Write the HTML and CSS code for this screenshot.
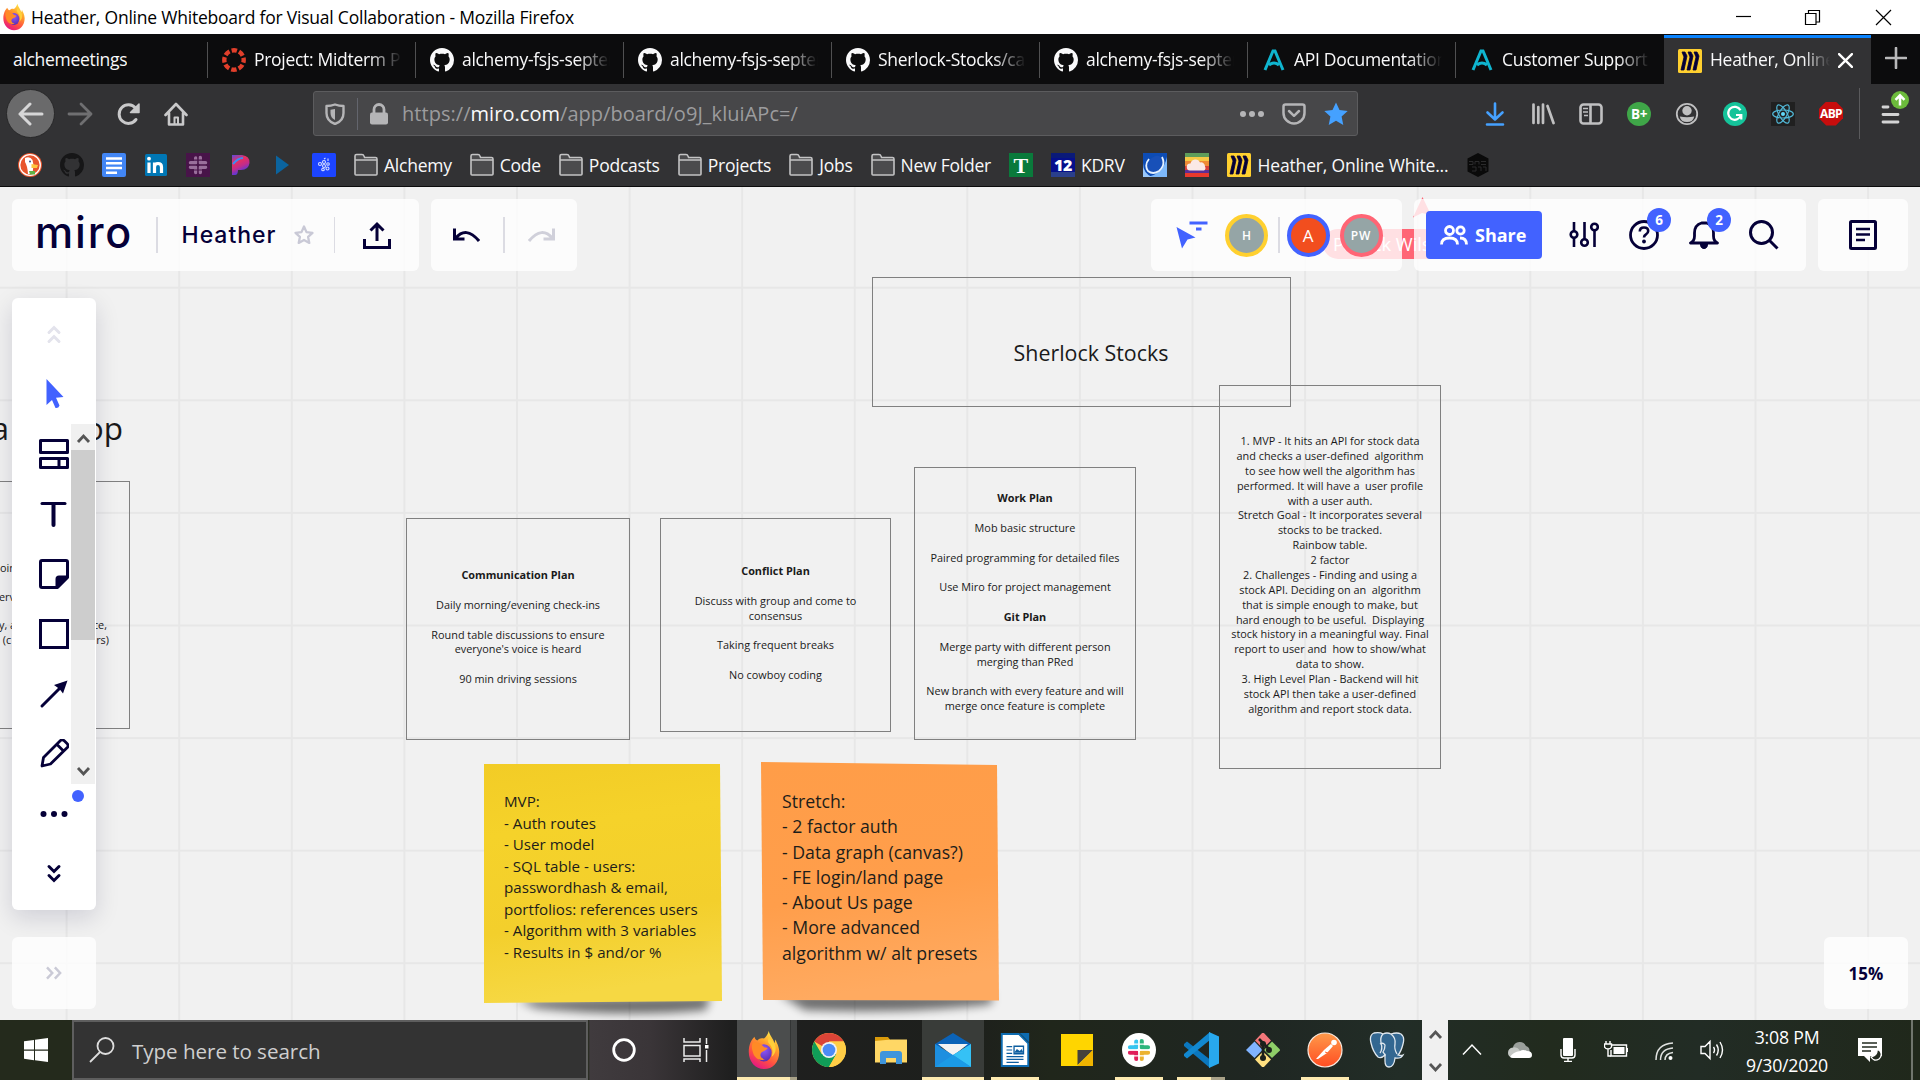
FILE: index.html
```html
<!DOCTYPE html>
<html lang="en">
<head>
<meta charset="utf-8">
<title>Heather, Online Whiteboard for Visual Collaboration</title>
<link rel="stylesheet" href="styles.css">
</head>
<body>
<svg class="defs" aria-hidden="true">
  <defs>
    <linearGradient id="ffFlame" x1=".8" y1="0" x2=".3" y2="1"><stop offset="0" stop-color="#fff44f"/><stop offset=".35" stop-color="#ffa02a"/><stop offset=".7" stop-color="#ff4f42"/><stop offset="1" stop-color="#e31587"/></linearGradient>
    <radialGradient id="ffGlobe" cx=".5" cy=".3" r=".7"><stop offset="0" stop-color="#9059ff"/><stop offset="1" stop-color="#5b2fae"/></radialGradient>
    <linearGradient id="pandora" x1="0" y1="0" x2=".4" y2="1"><stop offset="0" stop-color="#5a4be0"/><stop offset=".35" stop-color="#e8305f"/><stop offset=".65" stop-color="#c22c8a"/><stop offset="1" stop-color="#3a3cf0"/></linearGradient>
    <linearGradient id="postman" x1="0" y1="0" x2="0" y2="1"><stop offset="0" stop-color="#ff9a4a"/><stop offset="1" stop-color="#ff4d22"/></linearGradient>
    <linearGradient id="yellowPaper" x1="0" y1="0" x2=".15" y2="1"><stop offset="0" stop-color="#f2cc26"/><stop offset=".3" stop-color="#f5d22a"/><stop offset=".7" stop-color="#f3cf2c"/><stop offset="1" stop-color="#f6d843"/></linearGradient>
    <linearGradient id="orangePaper" x1="0" y1="0" x2=".15" y2="1"><stop offset="0" stop-color="#ff9d48"/><stop offset=".6" stop-color="#ff9e4b"/><stop offset="1" stop-color="#ffaa60"/></linearGradient>
    <filter id="soft" x="-20%" y="-100%" width="140%" height="300%"><feGaussianBlur stdDeviation="5"/></filter>
    <symbol id="firefox" viewBox="0 0 34 42">
      <path d="M22 1c-1 4-3 6-5 8-3-1-5 0-7 2-2-1-3-3-3-4C4 10 1 15 1 23c0 10 7 18 16 18s16-7 16-18c0-6-3-10-4-13l-1 4C27 9 23 6 22 1z" fill="url(#ffFlame)"/>
      <ellipse cx="17" cy="24" rx="8" ry="9" fill="url(#ffGlobe)"/>
      <path d="M5 13c5-1 9 1 12 5l4 1c-2 3-5 3-7 5-2 3 0 6 4 7-7 2-12-3-13-9-1-3-1-6 0-9z" fill="#ff8a26"/>
      <path d="M22 14c4 4 5 9 3 14 3-2 5-6 4-11-1-5-5-7-7-9-1 3-1 5 0 6z" fill="#ffcf3a"/>
    </symbol>
    <symbol id="github" viewBox="0 0 16 16"><path fill="currentColor" fill-rule="evenodd" d="M8 0C3.58 0 0 3.58 0 8c0 3.54 2.29 6.53 5.47 7.59.4.07.55-.17.55-.38 0-.19-.01-.82-.01-1.49-2.01.37-2.53-.49-2.69-.94-.09-.23-.48-.94-.82-1.13-.28-.15-.68-.52-.01-.53.63-.01 1.08.58 1.23.82.72 1.21 1.87.87 2.33.66.07-.52.28-.87.51-1.07-1.78-.2-3.64-.89-3.64-3.95 0-.87.31-1.59.82-2.15-.08-.2-.36-1.02.08-2.12 0 0 .67-.21 2.2.82.64-.18 1.32-.27 2-.27s1.36.09 2 .27c1.53-1.04 2.2-.82 2.2-.82.44 1.1.16 1.92.08 2.12.51.56.82 1.27.82 2.15 0 3.07-1.87 3.75-3.65 3.95.29.25.54.73.54 1.48 0 1.07-.01 1.93-.01 2.2 0 .21.15.46.55.38A8.01 8.01 0 0016 8c0-4.42-3.58-8-8-8z"/></symbol>
    <symbol id="canvas" viewBox="0 0 24 24"><circle cx="12" cy="12" r="9.700" fill="none" stroke="#e13f2b" stroke-width="4.400" stroke-dasharray="5.400 2.220" stroke-dashoffset="2.700"/></symbol>
    <symbol id="alpha" viewBox="0 0 24 24"><path d="M3 22 11 3h2l8 19M7 17q5-4 10 0" fill="none" stroke="#0fb5cf" stroke-width="3"/></symbol>
    <symbol id="mirofav" viewBox="0 0 24 24"><rect width="24" height="24" rx="1.500" fill="#ffd02f"/><path d="M4 3h3l2 4-3 14H3l3-13zM10 3h3l2 4-3 14H9l3-13zM16 3h3l2 4-3 14h-3l3-13z" fill="#050038" stroke="#050038" stroke-width=".8"/></symbol>
    <symbol id="folder" viewBox="0 0 24 24"><path d="M1 21V3q0-1.500 1.500-1.500H8q1.500 0 2 1.500l.6 1.500H21.500Q23 4.500 23 6v15q0 1-1 1H2q-1 0-1-1z" fill="#4b4b4d" stroke="#c3c3c4" stroke-width="1.600"/><path d="M1 7h22" stroke="#c3c3c4" stroke-width="1.500"/></symbol>
    <symbol id="slack" viewBox="0 0 24 24"><g fill="none" stroke-width="4.200" stroke-linecap="round"><path d="M9.300 3.500v5.800M3 9.300h6.300" stroke="var(--s1)"/><path d="M14.700 3v6.300M14.700 9.300H21" stroke="var(--s2)"/><path d="M14.700 14.700v6.300M14.700 14.700H21" stroke="var(--s3)"/><path d="M9.300 14.700v6.300M3 14.700h6.300" stroke="var(--s4)"/></g><path d="M11.900 0v24M0 12h24M5 6.100h14M5 17.900h14" stroke="var(--sb)" stroke-width="1.300"/></symbol>
  </defs>
</svg>

<header class="titlebar">
  <svg class="title-icon"><use href="#firefox"/></svg>
  <span class="title-text">Heather, Online Whiteboard for Visual Collaboration - Mozilla Firefox</span>
  <svg class="win-controls" viewBox="0 0 160 18" fill="none" stroke="#000" stroke-width="1.200"><path d="M1 8.500h15"/><path d="M70.500 5.500h10.500v11h-10.500zM73.500 5.500v-3h11v11.500h-3"/><path d="M141 2l15 15M156 2l-15 15"/></svg>
</header>

<nav class="tabs">
  <div class="tab first"><span class="tab-label">alchemeetings</span></div>
  <div class="tab"><svg class="fav"><use href="#canvas"/></svg><span class="tab-label fade">Project: Midterm Project</span></div>
  <div class="tab"><svg class="fav"><use href="#github"/></svg><span class="tab-label fade">alchemy-fsjs-september</span></div>
  <div class="tab"><svg class="fav"><use href="#github"/></svg><span class="tab-label fade">alchemy-fsjs-september</span></div>
  <div class="tab"><svg class="fav"><use href="#github"/></svg><span class="tab-label fade">Sherlock-Stocks/capstone</span></div>
  <div class="tab"><svg class="fav"><use href="#github"/></svg><span class="tab-label fade">alchemy-fsjs-september</span></div>
  <div class="tab"><svg class="fav"><use href="#alpha"/></svg><span class="tab-label fade">API Documentation</span></div>
  <div class="tab last"><svg class="fav"><use href="#alpha"/></svg><span class="tab-label fade">Customer Support</span></div>
  <div class="tab active"><svg class="fav"><use href="#mirofav"/></svg><span class="tab-label fade">Heather, Online Wh</span><svg class="tab-close" viewBox="0 0 14 14"><path d="M1 1l12 12M13 1L1 13" stroke="#fff" stroke-width="2.200" stroke-linecap="round"/></svg></div>
  <svg class="new-tab" viewBox="0 0 22 22"><path d="M11 1v20M1 11h20" stroke="#b9b9ba" stroke-width="2.600" stroke-linecap="round"/></svg>
</nav>

<div class="navbar">
  <span class="back"><svg viewBox="0 0 26 24" class="i26" fill="none" stroke="#d6d6d7" stroke-width="3" stroke-linecap="round" stroke-linejoin="round"><path d="M24 12H2M12 2L2 12l10 10"/></svg></span>
  <svg viewBox="0 0 26 24" class="i26 fwd" fill="none" stroke="#6f6f71" stroke-width="2.800" stroke-linecap="round" stroke-linejoin="round"><path d="M2 12h22M14 2l10 10-10 10"/></svg>
  <svg viewBox="0 0 24 24" class="i24 reload" fill="none" stroke="#c9c9ca" stroke-width="3" stroke-linecap="round"><path d="M19 17.500A9.300 9.300 0 1 1 18.500 6"/><path d="M22 2v8.500h-8.500z" fill="#c9c9ca" stroke-width="1.500" stroke-linejoin="round"/></svg>
  <svg viewBox="0 0 24 24" class="i24 home" fill="none" stroke="#c9c9ca" stroke-width="2.600" stroke-linecap="round" stroke-linejoin="round"><path d="M1.500 13L12 2l10.500 11M5 11v11.500h14V11"/><path d="M10.500 22v-6.500h3.500V22" stroke-width="2"/></svg>
  <div class="urlbar">
    <svg viewBox="0 0 20 22" class="shield"><path d="M10 1.500Q14 3 18.500 3v7q0 8-8.500 11Q1.500 18 1.500 10V3Q6 3 10 1.500z" fill="none" stroke="#b5b5b7" stroke-width="2.400" stroke-linejoin="round"/><path d="M10 6v11q-4.500-2-4.500-7V6.700z" fill="#b5b5b7"/></svg>
    <i class="url-sep"></i>
    <svg viewBox="0 0 20 22" class="lock"><path d="M5 10V6.500a5 5 0 0 1 10 0V10" fill="none" stroke="#b5b5b7" stroke-width="2.800"/><rect x="1" y="9.500" width="18" height="12" rx="2" fill="#b5b5b7"/></svg>
    <span class="url">https://<b>miro.com</b>/app/board/o9J_kluiAPc=/</span>
    <svg viewBox="0 0 26 8" class="url-dots" fill="#b5b5b7"><circle cx="4" cy="4" r="3"/><circle cx="13" cy="4" r="3"/><circle cx="22" cy="4" r="3"/></svg>
    <svg viewBox="0 0 24 22" class="pocket" fill="none" stroke="#b5b5b7" stroke-width="2.500" stroke-linecap="round" stroke-linejoin="round"><path d="M3.500 1.500h17q2 0 2 2V10a10.500 10.500 0 0 1-21 0V3.500q0-2 2-2z"/><path d="M7 8l5 4.800L17 8"/></svg>
    <svg viewBox="0 0 24 24" class="i24"><path d="M12 .5l3.500 7.600 8.200.9-6.100 5.600 1.700 8.400L12 18.800 4.700 23l1.700-8.400L.3 9l8.200-.9z" fill="#45a1ff"/></svg>
  </div>
  <div class="extensions">
    <svg viewBox="0 0 24 24" class="i24" fill="none" stroke="#45a1ff" stroke-width="2.600" stroke-linecap="round" stroke-linejoin="round"><path d="M12 1.500V17M4.500 10.500l7.500 7 7.500-7M4 22.500h16"/></svg>
    <svg viewBox="0 0 24 24" class="i24" fill="none" stroke="#c0c0c1" stroke-width="2.700" stroke-linecap="round"><path d="M2.500 2.500v18.500M7.300 5v16M12 2.500v18.500M16.500 4l6 17"/></svg>
    <svg viewBox="0 0 24 24" class="i24" fill="none" stroke="#c0c0c1" stroke-width="2.600"><rect x="1.500" y="2.500" width="21" height="19" rx="3"/><path d="M11.500 2.500v19"/><path d="M4 6.500h5M4 10h5M5 13.500h4" stroke-width="1.500"/></svg>
    <span class="ext ext-b">B+</span>
    <svg viewBox="0 0 24 24" class="i24"><circle cx="12" cy="12" r="10.200" fill="none" stroke="#c0c0c1" stroke-width="1.800"/><circle cx="12" cy="8.800" r="4.700" fill="#c0c0c1"/><path d="M4.800 14.500q7.200 1.500 14.400 0-1 5.500-7.200 5.500t-7.200-5.500z" fill="#c0c0c1"/></svg>
    <svg viewBox="0 0 24 24" class="i24"><circle cx="12" cy="12" r="12" fill="#15c39a"/><path d="M17.500 8.300A6.500 6.500 0 1 0 18 13h-5M18.300 12.500v5" fill="none" stroke="#fff" stroke-width="2.200"/></svg>
    <svg viewBox="0 0 24 24" class="i24" fill="none" stroke="#52b9d8" stroke-width="1.200"><rect width="24" height="24" fill="#202020" stroke="none"/><ellipse cx="12" cy="12" rx="10.300" ry="4"/><ellipse cx="12" cy="12" rx="10.300" ry="4" transform="rotate(60 12 12)"/><ellipse cx="12" cy="12" rx="10.300" ry="4" transform="rotate(120 12 12)"/><circle cx="12" cy="12" r="2" fill="#61dafb" stroke="none"/></svg>
    <span class="ext ext-abp">ABP</span>
  </div>
  <div class="menu">
    <svg viewBox="0 0 30 34" class="menu-icon"><path d="M2 16h5M2 23.500h15M2 31h15" stroke="#d3d3d4" stroke-width="2.800" stroke-linecap="round"/><circle cx="19" cy="9" r="9" fill="#6cbb3c"/><path d="M19 14.500V4.500M14.500 8.800L19 4.300l4.500 4.500" fill="none" stroke="#fff" stroke-width="2.500"/></svg>
  </div>
</div>

<div class="bookmarks">
  <svg class="i24" viewBox="0 0 24 24"><circle cx="12" cy="12" r="12" fill="#e8552d"/><circle cx="12" cy="12" r="10.300" fill="none" stroke="#fff" stroke-width="1.300"/><path d="M7 5q5-2 7.500 2l1 5-1 9-4.500 0q-.5-8-3-12z" fill="#fff"/><path d="M13.500 11l6.500 1-1 3h-5.500z" fill="#fdc43f"/><path d="M11 18h6v3.500h-5z" fill="#5fb246"/><circle cx="12" cy="8.500" r="1" fill="#2d4f8e"/></svg>
  <svg class="i24 dark"><use href="#github"/></svg>
  <svg class="i24" viewBox="0 0 24 24"><rect width="24" height="24" rx="2" fill="#4286f5"/><path d="M4 5.500h16M4 10.200h16M4 15h16M4 19.700h11" stroke="#fff" stroke-width="2.500"/></svg>
  <svg class="i24" viewBox="0 0 24 24"><rect x="1" y="1" width="22" height="22" rx="1.500" fill="#0077b5"/><path d="M5 9.500v10.500M10.500 9.500v10.500M10.500 14q0-3.500 3.500-3.500t3.500 3.500v6" fill="none" stroke="#fff" stroke-width="3.200"/><circle cx="5" cy="5.700" r="1.900" fill="#fff"/></svg>
  <svg class="i24 slack-dim" viewBox="0 0 24 24"><rect width="24" height="24" fill="#481449"/><use href="#slack" x="2" y="2" width="20" height="20"/></svg>
  <svg class="i24" viewBox="0 0 24 24"><path d="M4 2h10q8 1 7.500 8-1 7-8.500 7h-3q0 5-3 5H4z" fill="url(#pandora)"/><path d="M5 11q5-6 10-6" stroke="#3c8df5" stroke-width="2" fill="none"/></svg>
  <svg class="i24" viewBox="0 0 24 24"><path d="M6 2.500L19 12 6 21.500z" fill="#0b649f"/></svg>
  <svg class="i24" viewBox="0 0 24 24"><rect width="24" height="24" rx="1.500" fill="#1c44ff"/><g fill="none" stroke="#d5dcff" stroke-width="1.100"><circle cx="8" cy="11" r="1.500"/><circle cx="12" cy="9" r="1.500"/><circle cx="12" cy="13" r="1.500"/><circle cx="15.500" cy="15.500" r="1.500"/><circle cx="16" cy="11" r="1.300"/><circle cx="11" cy="16.500" r="1.300"/><path d="M12 6l1.500-1M16 8V5.500"/></g></svg>
  <span class="bm"><svg class="i24"><use href="#folder"/></svg>Alchemy</span>
  <span class="bm"><svg class="i24"><use href="#folder"/></svg>Code</span>
  <span class="bm"><svg class="i24"><use href="#folder"/></svg>Podcasts</span>
  <span class="bm"><svg class="i24"><use href="#folder"/></svg>Projects</span>
  <span class="bm"><svg class="i24"><use href="#folder"/></svg>Jobs</span>
  <span class="bm"><svg class="i24"><use href="#folder"/></svg>New Folder</span>
  <span class="fav-t">T</span>
  <span class="bm"><span class="fav-12">12</span>KDRV</span>
  <svg class="i24" viewBox="0 0 24 24"><path d="M0 0h24v24H0z" fill="#0d4cb5"/><path d="M24 4v20H3Q20 22 24 4z" fill="#7db9fb"/><path d="M0 24V10q0 10 9 14z" fill="#9ac8fb"/><ellipse cx="12" cy="11.500" rx="7" ry="9.500" transform="rotate(35 12 11.500)" fill="#1850b8"/><path d="M19 4q4 8-3 14-6 4-11 0-4-6 1-12" fill="none" stroke="#e6f2ff" stroke-width="1.800"/></svg>
  <svg class="i24" viewBox="0 0 24 24"><path fill="#5e9d5a" d="M0 0h24v4H0z"/><path fill="#f6c945" d="M0 4h24v4H0z"/><path fill="#ef8b36" d="M0 8h24v5H0z"/><path fill="#d9403a" d="M0 13h24v4H0z"/><path fill="#5b2f94" d="M0 17h24v3H0z"/><path fill="#e8392c" d="M0 20h24v4H0z"/><path d="M5 17.500a3.500 3.500 0 0 1 .5-7 5 5 0 0 1 9.500-1 4 4 0 0 1 5 4 3 3 0 0 1-1 4z" fill="#fbe9e6"/></svg>
  <span class="bm wide"><svg class="i24"><use href="#mirofav"/></svg>Heather, Online White...</span>
  <svg class="i24" viewBox="0 0 24 24"><path d="M12 0l10.500 5.500v13L12 24 1.500 18.500v-13z" fill="#0a0a0a"/><path d="M3 8.500h4v3H3M9 11.500v-3h4v3M15 8.500h5M15 11.500h5M6 14h4v4H6M12 14h3v4M17 14h3v4" fill="none" stroke="#2b2b2c" stroke-width="1"/></svg>
</div>

<main class="board">
  <div class="shape s-left"></div>
  <p class="free title-a">a</p><p class="free title-op">op</p>
  <p class="free frag f1">oin</p><p class="free frag f2">erv</p><p class="free frag f3">y, a</p><p class="free frag f4"> (c</p>
  <p class="free frag f5">ce,</p><p class="free frag f6">rs)</p>

  <div class="shape s-title"><span>Sherlock Stocks</span></div>
  <div class="shape s-comm"><b>Communication Plan</b><br><br>Daily morning/evening check-ins<br><br>Round table discussions to ensure<br>everyone's voice is heard<br><br>90 min driving sessions</div>
  <div class="shape s-conf"><b>Conflict Plan</b><br><br>Discuss with group and come to<br>consensus<br><br>Taking frequent breaks<br><br>No cowboy coding</div>
  <div class="shape s-work"><b>Work Plan</b><br><br>Mob basic structure<br><br>Paired programming for detailed files<br><br>Use Miro for project management<br><br><b>Git Plan</b><br><br>Merge party with different person<br>merging than PRed<br><br>New branch with every feature and will<br>merge once feature is complete</div>
  <div class="shape s-mvp">1. MVP - It hits an API for stock data<br>and checks a user-defined&nbsp; algorithm<br>to see how well the algorithm has<br>performed. It will have a&nbsp; user profile<br>with a user auth.<br>Stretch Goal - It incorporates several<br>stocks to be tracked.<br>Rainbow table.<br>2 factor<br>2. Challenges - Finding and using a<br>stock API. Deciding on an&nbsp; algorithm<br>that is simple enough to make, but<br>hard enough to be useful.&nbsp; Displaying<br>stock history in a meaningful way. Final<br>report to user and&nbsp; how to show/what<br>data to show.<br>3. High Level Plan - Backend will hit<br>stock API then take a user-defined<br>algorithm and report stock data.</div>

  <div class="sticky yellow">
    <svg class="paper" viewBox="0 0 250 256"><path d="M34 236l192-4-4 14q-80 8-170-2z" fill="#000" opacity=".55" filter="url(#soft)"/><path d="M0 0h236l2 237L0 239z" fill="url(#yellowPaper)"/></svg>
    <div class="note">MVP:<br>- Auth routes<br>- User model<br>- SQL table - users:<br>passwordhash &amp; email,<br>portfolios: references users<br>- Algorithm with 3 variables<br>- Results in $ and/or %</div>
  </div>
  <div class="sticky orange">
    <svg class="paper" viewBox="0 0 250 256"><path d="M18 232h214l-2 10q-80 10-186 6z" fill="#000" opacity=".55" filter="url(#soft)"/><path d="M0 0l236 3 2 235.500-236-.5z" fill="url(#orangePaper)"/></svg>
    <div class="note">Stretch:<br>- 2 factor auth<br>- Data graph (canvas?)<br>- FE login/land page<br>- About Us page<br>- More advanced<br>algorithm w/ alt presets</div>
  </div>

  <svg class="peer-cursor" viewBox="0 0 18 21"><path d="M9.500 0l8.500 18-9-2-9 4.500z" fill="#ff6575"/></svg>
  <span class="peer-name">Patrick Wilson</span>

  <div class="topbar">
    <section class="panel p-board">
      <span class="logo">miro</span><i class="sep"></i>
      <span class="board-name">Heather</span>
      <svg class="star" viewBox="0 0 22 22"><path d="M11 2.500l2.500 5.600 6 .7-4.400 4.100 1.200 6L11 16l-5.300 2.900 1.200-6L2.500 8.800l6-.7z" fill="none" stroke="#c9c9d6" stroke-width="2.300" stroke-linejoin="round"/></svg>
      <i class="sep"></i>
      <svg class="export" viewBox="0 0 28 28" fill="none" stroke="#050038" stroke-width="3"><path d="M1.500 18v8.500h25V18M14 20V3M7.500 9.500L14 3l6.500 6.500"/></svg>
    </section>
    <section class="panel p-undo">
      <svg class="i28" viewBox="0 0 28 28" fill="none" stroke="#050038" stroke-width="3"><path d="M2.500 7.500v10.500h10M3.500 17.500Q14 4.500 27 20"/></svg>
      <i class="sep"></i>
      <svg class="i28" viewBox="0 0 28 28" fill="none" stroke="#d0d0da" stroke-width="3"><path d="M25.500 7.500v10.500h-10M24.500 17.500Q14 4.500 1 20"/></svg>
    </section>
    <section class="panel p-users">
      <svg class="follow" viewBox="0 0 32 28"><path d="M.5 6l19 10.500-8 2-5.500 9z" fill="#4262ff"/><path d="M13.500 2h18M20 8h5.500" stroke="#4262ff" stroke-width="3"/></svg>
      <span class="avatar h">H</span><i class="sep"></i><span class="avatar a">A</span><span class="avatar pw">PW</span>
    </section>
    <section class="panel p-actions">
      <span class="share"><svg viewBox="0 0 28 20" fill="none" stroke="#fff" stroke-width="2.800"><circle cx="9.500" cy="5.500" r="4"/><circle cx="20.500" cy="5.500" r="3.700"/><path d="M1.500 19.500q0-6.500 8-6.500t8 6.500M20 13q6.500 0 6.500 6.500"/></svg>Share</span>
      <svg class="sliders" viewBox="0 0 30 26" fill="none" stroke="#050038" stroke-width="2.600"><path d="M5 0v9M5 16v9M15.500 0v17M25.500 8v17"/><circle cx="5" cy="12.500" r="3.300"/><circle cx="15.500" cy="20.500" r="3.300"/><circle cx="25.500" cy="5" r="3.300"/></svg>
      <span class="badged"><svg class="i30" viewBox="0 0 30 30"><circle cx="15" cy="15" r="13.500" fill="none" stroke="#050038" stroke-width="2.800"/><path d="M10.800 11.500q0-4 4.200-4t4.200 3.500q0 2-2.200 3.300-2 1.200-2 3.200" fill="none" stroke="#050038" stroke-width="2.600"/><circle cx="15" cy="21.500" r="1.900" fill="#050038"/></svg><em>6</em></span>
      <span class="badged"><svg class="i30" viewBox="0 0 30 30"><path d="M1.500 23h27q-4-2-4-7v-3q0-8-7-10h-5q-7 2-7 10v3q0 5-4 7z" fill="none" stroke="#050038" stroke-width="2.800" stroke-linejoin="round"/><path d="M11.500 24a3.500 4.500 0 0 0 7 0z" fill="#050038" stroke="#050038"/></svg><em>2</em></span>
      <svg class="i30 search" viewBox="0 0 30 30" fill="none" stroke="#050038" stroke-width="3"><circle cx="12.500" cy="12.500" r="11"/><path d="M20.500 20.500l8 8"/></svg>
    </section>
    <section class="panel p-notes"><svg viewBox="0 0 28 30" fill="none" stroke="#050038" stroke-width="3"><rect x="1.500" y="1.500" width="25" height="27" rx="1"/><path d="M7 9h14M7 14.500h14M7 20h9" stroke-width="2.400"/></svg></section>
  </div>

  <aside class="tools">
    <svg viewBox="0 0 30 30" fill="none" stroke="#e3e3ec" stroke-width="3" stroke-linecap="round"><path d="M10 13.500L15 8.500l5 5M10 22.500L15 17.500l5 5"/></svg>
    <svg viewBox="0 0 30 30"><path d="M7.500 0l17 18-7.500.8 3.500 7.700q-1 3-4 2.500L13 21l-5.500 5z" fill="#4262ff"/></svg>
    <svg viewBox="0 0 30 30" fill="none" stroke="#050038" stroke-width="3" stroke-linejoin="round"><path d="M1.500 1.500h27v12h-27zM1.500 19.500h27v9h-27zM20 19.500v9"/></svg>
    <svg viewBox="0 0 30 30" fill="none" stroke="#050038" stroke-linecap="round"><path d="M3 4.500h23" stroke-width="3"/><path d="M14.500 5v21" stroke-width="4"/></svg>
    <svg viewBox="0 0 30 30" stroke="#050038" stroke-width="3" stroke-linejoin="round" fill="none"><path d="M3 1.500h24q1.500 0 1.500 1.500v15.500l-10 10H3q-1.500 0-1.500-1.500V3q0-1.500 1.500-1.500z"/><path d="M28 18l-10 10V20q0-2 2-2z" fill="#050038"/></svg>
    <svg viewBox="0 0 30 30"><path d="M1.500 1.500h27v27h-27z" fill="none" stroke="#050038" stroke-width="3"/></svg>
    <svg viewBox="0 0 30 30"><path d="M3 27L21 9" stroke="#050038" stroke-width="3" stroke-linecap="round"/><path d="M28.500 1.500l-4.500 13-3.500-4.500-5.500-4z" fill="#050038"/></svg>
    <svg viewBox="0 0 30 30" fill="none" stroke="#050038" stroke-width="2.800" stroke-linejoin="round"><path d="M3 27l1.500-8.500L21.500 1.500q2-1.500 4 .5l2.500 2.500q2 2 .3 4L11.500 25zM18 5.500l6.500 6.500"/></svg>
    <svg viewBox="0 0 30 30" fill="#050038"><circle cx="4.500" cy="15" r="3"/><circle cx="15" cy="15" r="3"/><circle cx="25.500" cy="15" r="3"/></svg>
    <svg viewBox="0 0 30 30" fill="none" stroke="#050038" stroke-width="3" stroke-linecap="round"><path d="M10 7.500l5 5 5-5M10 16.500l5 5 5-5"/></svg>
    <i class="new-dot"></i>
    <div class="scroll"><svg viewBox="0 0 24 26"><path d="M7 18l5.500-6 5.500 6" fill="none" stroke="#555" stroke-width="2.800"/></svg><i></i><svg class="down" viewBox="0 0 24 26"><path d="M7 10l5.500 6 5.500-6" fill="none" stroke="#555" stroke-width="2.800"/></svg></div>
  </aside>
  <div class="corner"><span class="panel expand"><svg viewBox="0 0 20 16" fill="none" stroke="#cacad6" stroke-width="2.800"><path d="M2 1.500L8 8l-6 6.500M11 1.500L17 8l-6 6.500"/></svg></span><span class="panel zoom">15%</span></div>
</main>

<footer class="taskbar">
  <span class="start"><svg viewBox="0 0 24 24" fill="#fff"><path d="M0 3.300l10-1.400V11.500H0zM11 1.700L24 0v11.500H11zM0 12.700h10v9.500L0 20.800zM11 12.700h13V24l-13-1.700z"/></svg></span>
  <div class="searchbox"><svg viewBox="0 0 26 26" fill="none" stroke="#ddd" stroke-width="1.800"><circle cx="16.500" cy="9" r="8"/><path d="M11 15L1 25"/></svg><span>Type here to search</span></div>
  <span class="cell cortana"><svg class="i24" viewBox="0 0 24 24"><circle cx="12" cy="12" r="10.300" fill="none" stroke="#fff" stroke-width="2.800"/></svg></span>
  <span class="cell taskview"><svg class="i26" viewBox="0 0 26 24" fill="none" stroke="#ececec" stroke-width="1.500"><path d="M1 0v4h16V0M1 7.500h16v10.500H1zM1 24v-3h16v3M23.500 0v6M23.500 12v12"/><path d="M22 7h3.500v3.500H22z" fill="#fff" stroke="none"/></svg></span>
  <span class="cell firefox on multi"><svg class="app"><use href="#firefox"/></svg></span>
  <span class="cell"><svg class="app" viewBox="0 0 34 34"><circle cx="17" cy="17" r="17" fill="#ffcd46"/><path d="M17 17L2.300 8.500A17 17 0 0 1 31.700 8.500H17z" fill="#db4437"/><path d="M2.300 8.500A17 17 0 0 0 17 34l7.400-13H17L9.600 21z" fill="#109d58"/><path d="M17 8.500h14.700A17 17 0 0 1 17 34l7.400-13z" fill="#ffcd46"/><circle cx="17" cy="17" r="8" fill="#f1f1f1"/><circle cx="17" cy="17" r="6.300" fill="#4c8bf5"/></svg></span>
  <span class="cell"><svg class="app" viewBox="0 0 34 34"><path d="M1 4h13l3 4H1z" fill="#d99a0a"/><path d="M1 8l16-1.500h16v23H1z" fill="#ffd765"/><path d="M6 31V21q0-3 3-3h16q3 0 3 3v10h-6v-6H12v6z" fill="#3f95dc"/></svg></span>
  <span class="cell on line"><svg class="app big" viewBox="0 0 36 34"><path d="M0 11L18 0l18 11v3H0z" fill="#0b63b8"/><path d="M3 11h30L18 23z" fill="#f3f3f3"/><path d="M0 11v23h36V11L18 22z" fill="#1d8fe0"/><path d="M36 11v23L18 22z" fill="#35c1f5"/><path d="M0 34l18-12 18 12z" fill="#1b9be6"/></svg></span>
  <span class="cell run"><svg class="app" viewBox="0 0 34 36"><path d="M3 1h18l10 10v24H3z" fill="#fff" stroke="#0d6bb0" stroke-width="2"/><path d="M22 0h10v10z" fill="#0d6bb0"/><path d="M8 14.500h6M8 18h6M8 21.500h6M8 25h18M8 28h18M8 31h13" stroke="#0d5ea0" stroke-width="1.300"/><path d="M16 14h10v8H16z" fill="none" stroke="#0d5ea0" stroke-width="1.400"/><path d="M16 21l3-4 3 2 2-2 2 4z" fill="#0d5ea0"/></svg></span>
  <span class="cell"><svg class="app" viewBox="0 0 34 34"><path d="M1 1h32v32H1z" fill="#ffd500"/><path d="M17.500 17h15.500L17.500 32z" fill="#45403c"/><path d="M17.500 33L33 17v16z" fill="#f0b400"/></svg></span>
  <span class="cell run"><svg class="app slack-color" viewBox="0 0 34 34"><circle cx="17" cy="17" r="17" fill="#fff"/><use href="#slack" x="5" y="5" width="24" height="24"/></svg></span>
  <span class="cell run extra"><svg class="app big" viewBox="0 0 36 36"><path d="M1 12l3-2.500 23 18V36L1 14z" fill="#0b77be"/><path d="M1 24l3 2.500L27 8V0L1 22z" fill="#1288d0"/><path d="M26 0l10 4.500v27L26 36z" fill="#28a8ee"/></svg></span>
  <span class="cell"><svg class="app" viewBox="0 0 34 34"><path d="M17-1l8 8.500-8 8-8-8z" fill="#f3777a"/><path d="M8.500 8.500l8 8.500-8 8-8.500-8z" fill="#80b3ff"/><path d="M26 8.500l8.500 8.500-8.500 8-8-8z" fill="#8fce68"/><path d="M17 18.500l8 8-8 8.500-8-8.500z" fill="#ffe080"/><path d="M13 6l10 10M17 10v16" stroke="#1b201b" stroke-width="2.600"/><circle cx="17" cy="11" r="3" fill="#1b201b"/><circle cx="23" cy="17" r="3" fill="#1b201b"/><circle cx="17" cy="25" r="3" fill="#1b201b"/></svg></span>
  <span class="cell run"><svg class="app big" viewBox="0 0 36 36"><circle cx="18" cy="18" r="17" fill="url(#postman)" stroke="#f7e8df" stroke-width="1.200"/><path d="M9 27l8-9 7-6 2 2-6 7-9 6z" fill="#fff"/><circle cx="27" cy="10.500" r="2.800" fill="#fff"/><path d="M18 20l3 1" stroke="#ff6c37"/></svg></span>
  <span class="cell"><svg class="app big" viewBox="0 0 36 36"><path d="M5 1q6-1 9 1 4-2 8 0 6-2 10 0 4 3 2 10-2 8-5 11 3 1 5 0-2 4-8 3-1 9-6 9-4 0-4-6v-6q-4 4-7 2-5-5-7-14Q0 3 5 1z" fill="#336791" stroke="#dfe7ee" stroke-width="1.300"/><path d="M14 2q-3 3-2 9 2 6-1 10M22 2q5 4 4 10-1 5 2 10M11 12q3-2 5 1 0 4-2 7 2 2 2 4" fill="none" stroke="#dfe7ee" stroke-width="1.300"/></svg></span>
  <span class="bar-scroll"><svg viewBox="0 0 26 60" fill="none" stroke="#555" stroke-width="2.800"><path d="M8 18l5.500-6 5.500 6M8 44l5.500 6 5.500-6"/></svg></span>
  <div class="tray">
    <svg class="i24" viewBox="0 0 24 24" fill="none" stroke="#fff" stroke-width="1.500"><path d="M3 16.500l9-9.500 9 9.500"/></svg>
    <svg class="i24" viewBox="0 0 24 24"><path d="M5 9a7 7 0 0 1 13-1q4 1 3.500 6H6z" fill="#9a9f9b"/><path d="M0 15q0-5 5-5.500 4-1 7 3l-7 7Q0 19 0 15z" fill="#c5c8c5"/><path d="M2 19q3-5 10-6 3-2 7 0 5 0 5 4 0 3-3 3H5q-2 0-3-1z" fill="#fff"/></svg>
    <svg class="i24" viewBox="0 0 24 24"><rect x="7" y="0" width="10" height="18" rx="1" fill="#fff"/><path d="M5 11v6q0 3 3 3h8q3 0 3-3v-6M12 20v3.500M8 23.500h8" fill="none" stroke="#fff" stroke-width="1.400"/></svg>
    <svg class="i24" viewBox="0 0 24 24"><path d="M8 7h14.500v11H7v-6" fill="none" stroke="#fff" stroke-width="1.400"/><path d="M9.500 9h11v7h-11zM22.500 10h2v4h-2z" fill="#fff"/><path d="M2 3v3M6 3v3M.5 6h7v3q-1 2-3.500 2T.5 9zM4 11v7h3" fill="none" stroke="#fff" stroke-width="1.400"/></svg>
    <svg class="i24" viewBox="0 0 24 24" fill="none" stroke="#e0e2e0" stroke-width="1.500"><path d="M4 22Q4 6 21 5M8.500 22q0-11 12.500-12M13 22q0-6.500 8-7.500"/><circle cx="18.500" cy="20" r="2" fill="#fff" stroke="none"/></svg>
    <svg class="i24" viewBox="0 0 24 24" fill="none" stroke="#fff" stroke-width="1.400"><path d="M1 8.500h4l5-5v17l-5-5H1zM13.500 9q2 3 0 6M16.500 6.500q3.500 5.500 0 11M20 4q5 8 0 16"/></svg>
    <div class="clock"><span>3:08 PM</span><span>9/30/2020</span></div>
    <svg class="i26 action" viewBox="0 0 26 26"><path d="M1 1h24v18H13v6l-6-6H1z" fill="#fff"/><path d="M5 6h15M5 10h15M5 14h9" stroke="#232b20" stroke-width="1.600"/><path d="M20 12q1 6-6 8 3 5 8 2 4-4 1-8z" fill="#232b20" stroke="#fff" stroke-width="1.300"/></svg>
  </div>
  <i class="desk-edge"></i>
</footer>
</body>
</html>
```
FILE: styles.css
```css
* { box-sizing: border-box; }
body { margin: 0; width: 1920px; height: 1080px; overflow: hidden; display: flex; flex-direction: column; font-family: "Open Sans", "Noto Sans", sans-serif; }
svg { display: block; flex: none; }
p { margin: 0; }
.defs { position: absolute; width: 0; height: 0; }
.i24 { width: 24px; height: 24px; }
.i26 { width: 26px; height: 24px; }
.i28 { width: 28px; height: 28px; }
.i30 { width: 30px; height: 30px; }

.titlebar { height: 34px; flex: none; display: flex; align-items: center; background: #fff; padding-left: 1px; }
.title-icon { width: 26px; height: 28px; margin-top: -1px; }
.title-text { margin-left: 4px; font-size: 17.5px; letter-spacing: -.22px; white-space: nowrap; flex: 1; }
.win-controls { width: 160px; height: 18px; margin-right: 25px; }

.tabs { height: 50px; flex: none; display: flex; background: #0c0c0d; color: #f9f9fa; }
.tab { width: 208px; display: flex; align-items: center; gap: 8px; padding: 2px 14px 0; position: relative; }
.tab.first { padding-left: 13px; }
.tab::after { content: ""; position: absolute; right: 0; top: 8px; width: 1px; height: 36px; background: #505051; }
.tab.last::after, .tab.active::after { display: none; }
.fav { width: 24px; height: 24px; }
.tab-label { font-size: 17.5px; letter-spacing: -.3px; white-space: nowrap; overflow: hidden; margin-top: -3px; }
.fade { flex: 1; -webkit-mask-image: linear-gradient(90deg, #000 78%, transparent 100%); mask-image: linear-gradient(90deg, #000 78%, transparent 100%); }
.tab.active { width: 207px; background: #323234; border-top: 3px solid #0a84ff; padding-top: 0; margin-top: 1px; padding-bottom: 1px; }
.tab-close { width: 15px; height: 15px; margin-right: 4px; }
.new-tab { width: 22px; height: 22px; margin: 13px 0 0 14px; }

.navbar { height: 59px; flex: none; display: flex; align-items: center; background: #323234; padding-left: 6px; }
.back { width: 49px; height: 49px; border-radius: 50%; background: #6a6a6b; border: 1px solid #272728; display: grid; place-items: center; }
.fwd { margin-left: 12px; }
.reload { margin-left: 24px; }
.home { margin-left: 23px; }
.urlbar { width: 1045px; height: 45px; margin-left: 125px; background: #474749; border: 1px solid #5c5c5e; border-radius: 3px; display: flex; align-items: center; padding: 0 9px 0 11px; }
.shield { width: 20px; height: 22px; }
.url-sep { width: 1px; height: 32px; background: #63656d; margin: 0 11px 0 12px; }
.lock { width: 20px; height: 22px; }
.url { flex: 1; margin-left: 13px; color: #9c9c9e; font-size: 20px; letter-spacing: .04px; }
.url b { font-weight: 400; color: #f9f9fa; }
.url-dots { width: 26px; height: 8px; margin-right: 17px; }
.pocket { width: 24px; height: 22px; margin-right: 18px; }
.extensions { display: flex; gap: 24px; margin-left: 125px; }
.ext { width: 24px; height: 24px; display: grid; place-items: center; color: #fff; font-weight: 700; }
.ext-b { background: #3fa648; border-radius: 50%; font-size: 13.5px; letter-spacing: -.4px; }
.ext-abp { background: #c70d0d; font-size: 12px; letter-spacing: -.7px; clip-path: polygon(30% 0, 70% 0, 100% 30%, 100% 70%, 70% 100%, 30% 100%, 0 70%, 0 30%); }
.menu { border-left: 1px solid #5a5a5c; height: 51px; margin-left: 16px; padding: 3px 0 0 21px; }
.menu-icon { width: 30px; height: 34px; }

.bookmarks { height: 44px; flex: none; display: flex; align-items: center; gap: 18px; padding: 1px 0 0 18px; background: #323234; border-bottom: 1px solid #0c0c0d; color: #f9f9fa; font-size: 17.5px; }
.bm { display: flex; align-items: center; gap: 6px; letter-spacing: -.24px; white-space: nowrap; }
.bm.wide { gap: 7px; letter-spacing: -.17px; }
.dark { color: #161617; }
.slack-dim { --s1: #9a6f9c; --s2: #9a6f9c; --s3: #9a6f9c; --s4: #9a6f9c; --sb: #481449; }
.slack-color { --s1: #36c5f0; --s2: #2eb67d; --s3: #ecb22e; --s4: #e01e5a; --sb: #fff; }
.fav-t, .fav-12 { width: 24px; height: 24px; display: grid; place-items: center; color: #fff; }
.fav-t { background: #0a7a3b; font: 700 22px "Liberation Serif", serif; }
.fav-12 { background: linear-gradient(#0a1a78 5px, #050f8c 5px 19px, #2a3f8c 19px); font-weight: 800; font-size: 16px; letter-spacing: -.5px; }

.board { position: relative; height: 833px; flex: none; overflow: hidden; background-color: #f1f1f1; background-image: linear-gradient(90deg, #e7e7e7 1.500px, transparent 1.500px), linear-gradient(#e7e7e7 1.500px, transparent 1.500px); background-size: 112.6px 112.6px; background-position: 65.600px 99.700px; }
.free { position: absolute; color: #1a1a1a; white-space: pre; }
.title-a, .title-op { font-size: 31.5px; line-height: 42px; top: 220px; }
.title-a { right: 1911px; }
.title-op { right: 1797px; }
.frag { font-size: 10.850px; line-height: 15px; }
.f1 { left: 0; top: 373px; }
.f2 { left: -1px; top: 402px; }
.f3 { left: -1px; top: 430px; }
.f4 { left: 0; top: 445px; }
.f5 { right: 1813px; top: 430px; }
.f6 { right: 1811px; top: 445px; }
.shape { position: absolute; border: 1.500px solid #808080; text-align: center; color: #1a1a1a; font-size: 10.860px; line-height: 14.870px; white-space: nowrap; }
.s-left { left: -60px; top: 294px; width: 190px; height: 248px; }
.s-title { left: 872px; top: 90px; width: 419px; height: 130px; font-size: 21.400px; line-height: 30px; padding: 60px 0 0 19px; }
.s-comm { left: 406px; top: 331px; width: 224px; height: 222px; padding-top: 49px; }
.s-conf { left: 660px; top: 331px; width: 231px; height: 214px; padding-top: 45px; }
.s-work { left: 914px; top: 280px; width: 222px; height: 273px; padding-top: 23px; }
.s-mvp { left: 1219px; top: 198px; width: 222px; height: 384px; padding-top: 48px; }
.sticky { position: absolute; width: 250px; height: 256px; }
.sticky .paper { position: absolute; width: 250px; height: 256px; overflow: visible; }
.note { position: relative; padding-left: 20px; color: #1d1d1a; white-space: nowrap; }
.yellow { left: 484px; top: 577px; }
.orange { left: 761px; top: 575px; }
.yellow .note { font-size: 15.150px; line-height: 21.500px; padding-top: 27px; }
.orange .note { font-size: 17.720px; line-height: 25.250px; padding: 27px 0 0 21px; }
.peer-cursor { position: absolute; left: 1413px; top: 10px; width: 18px; height: 21px; }
.peer-name { position: absolute; left: 1323px; top: 42px; width: 160px; height: 30px; background: #ff6575; border-radius: 15px; color: #fff; font-size: 18.300px; line-height: 30px; padding-left: 10px; }

.panel { background: rgba(255,255,255,.8); border-radius: 6px; display: flex; align-items: center; color: #050038; }
.topbar { position: relative; display: flex; gap: 12px; padding: 12px 12px 0; }
.topbar .panel { height: 72px; }
.sep { width: 1.500px; height: 36px; background: #dcdce3; flex: none; }
.p-board { width: 407px; padding-left: 22px; }
.logo { font: 500 43px/60px "Inter", sans-serif; width: 122px; letter-spacing: 1.8px; padding: 0 0 6px 1px; }
.board-name { font: 500 23px "Inter", sans-serif; letter-spacing: 1px; margin-left: 24px; width: 111px; white-space: nowrap; }
.star { width: 22px; height: 22px; margin-right: 19px; }
.export { width: 28px; height: 28px; margin-left: 28px; }
.p-undo { width: 146px; padding: 0 21px; justify-content: space-between; }
.p-users { width: 251px; margin-left: 562px; padding-left: 25px; }
.follow { width: 32px; height: 28px; margin-right: 17px; }
.avatar { width: 43px; height: 43px; border-radius: 50%; display: grid; place-items: center; color: #fff; background: #95a5a6; border: 4px solid; font-weight: 600; font-size: 12px; }
.avatar.h { border-color: #ffd02f; margin-right: 10px; }
.avatar.a { border-color: #4262ff; background: #f24e1e; font-size: 17px; margin: 0 10px 0 7px; font-weight: 400; }
.avatar.pw { border-color: #ff6575; letter-spacing: .8px; }
.p-actions { width: 392px; padding-left: 12px; }
.share { width: 116px; height: 48px; border-radius: 4px; background: #4262ff; color: #fff; display: flex; align-items: center; gap: 7px; padding-left: 14px; font-weight: 700; font-size: 18px; }
.share svg { width: 28px; height: 20px; }
.sliders { width: 30px; height: 26px; margin: 0 30px 0 27px; }
.badged { position: relative; margin-right: 30px; }
.badged em { position: absolute; left: 18px; top: -12px; width: 24px; height: 24px; border-radius: 50%; background: #4262ff; color: #fff; font: 700 13.500px/24px "Open Sans", sans-serif; text-align: center; }
.p-notes { width: 90px; justify-content: center; }
.p-notes svg { width: 28px; height: 30px; }

.tools { position: absolute; left: 12px; top: 111px; width: 84px; height: 612px; border-radius: 6px; background: #fff; box-shadow: 0 8px 24px rgba(5,0,56,.14); display: flex; flex-direction: column; align-items: center; gap: 30px; padding-top: 21px; }
.tools > svg { width: 30px; height: 30px; }
.new-dot { position: absolute; left: 60px; top: 492px; width: 12px; height: 12px; border-radius: 50%; background: #4262ff; }
.scroll { position: absolute; left: 59px; top: 126px; width: 24px; height: 360px; background: #f0f0f0; }
.scroll svg { width: 24px; height: 26px; }
.scroll i { display: block; height: 190px; background: #cdcdcd; }
.scroll .down { margin-top: 118px; }
.corner { position: absolute; left: 12px; right: 12px; top: 750px; display: flex; justify-content: space-between; }
.corner .panel { width: 84px; height: 72px; justify-content: center; }
.expand svg { width: 20px; height: 14px; }
.zoom { font-weight: 700; font-size: 17px; }

.taskbar { height: 60px; flex: none; display: flex; background: linear-gradient(90deg, #242a1c 0, #242a1c 588px, #403b3e 590px, #3a3538 650px, #1f1f1f 730px, #1d1f1c 960px, #20261b 1050px, #1f2622 1250px, #222d27 1400px, #222b1e 1550px, #222c25 1700px, #20281b 1920px); color: #fff; }
.start { width: 72px; display: grid; place-items: center; }
.start svg { width: 24px; height: 24px; }
.searchbox { width: 516px; background: #333; border: 2px solid #5e5e5e; display: flex; align-items: center; gap: 17px; padding-left: 15px; color: #cfcfcf; font-size: 20.600px; letter-spacing: -.05px; }
.searchbox span { padding-top: 2px; }
.searchbox svg { width: 26px; height: 26px; }
.cell { width: 62px; display: flex; align-items: center; justify-content: center; position: relative; }
.cortana { width: 71px; }
.taskview { width: 71px; padding-left: 2px; }
.app { width: 34px; height: 34px; }
.app.big { width: 36px; height: 36px; }
.cell.firefox { width: 60px; margin: 0 1px 0 7px; padding-right: 6px; background: linear-gradient(90deg, #4b4d4d 53px, #333535 53px, #333535 54px, #434545 54px); }
.cell.firefox::after { content: ""; position: absolute; left: 0; right: 0; bottom: 0; height: 3px; background: linear-gradient(90deg, #fdeab0 53px, #a8a188 53px); }
.firefox .app { height: 40px; }
.line { background: #393c39; box-shadow: inset 0 -3px #fdeab0; }
.run::after { content: ""; position: absolute; left: 7px; bottom: 0; width: 48px; height: 3px; background: #fdeab0; }
.extra::after { background: linear-gradient(90deg, #fdeab0 34px, #a8a188 34px); }
.bar-scroll { width: 26px; background: #f0f0f0; margin-left: 4px; }
.bar-scroll svg { width: 26px; height: 60px; }
.tray { display: flex; align-items: center; gap: 24px; margin-left: 12px; flex: 1; }
.clock { display: flex; flex-direction: column; align-items: center; width: 90px; margin: 1px 1px 0 -6px; font-size: 17.700px; line-height: 28px; letter-spacing: -.2px; white-space: nowrap; }
.action { height: 26px; }
.desk-edge { width: 2px; background: #70756d; margin-right: 7px; }
```
